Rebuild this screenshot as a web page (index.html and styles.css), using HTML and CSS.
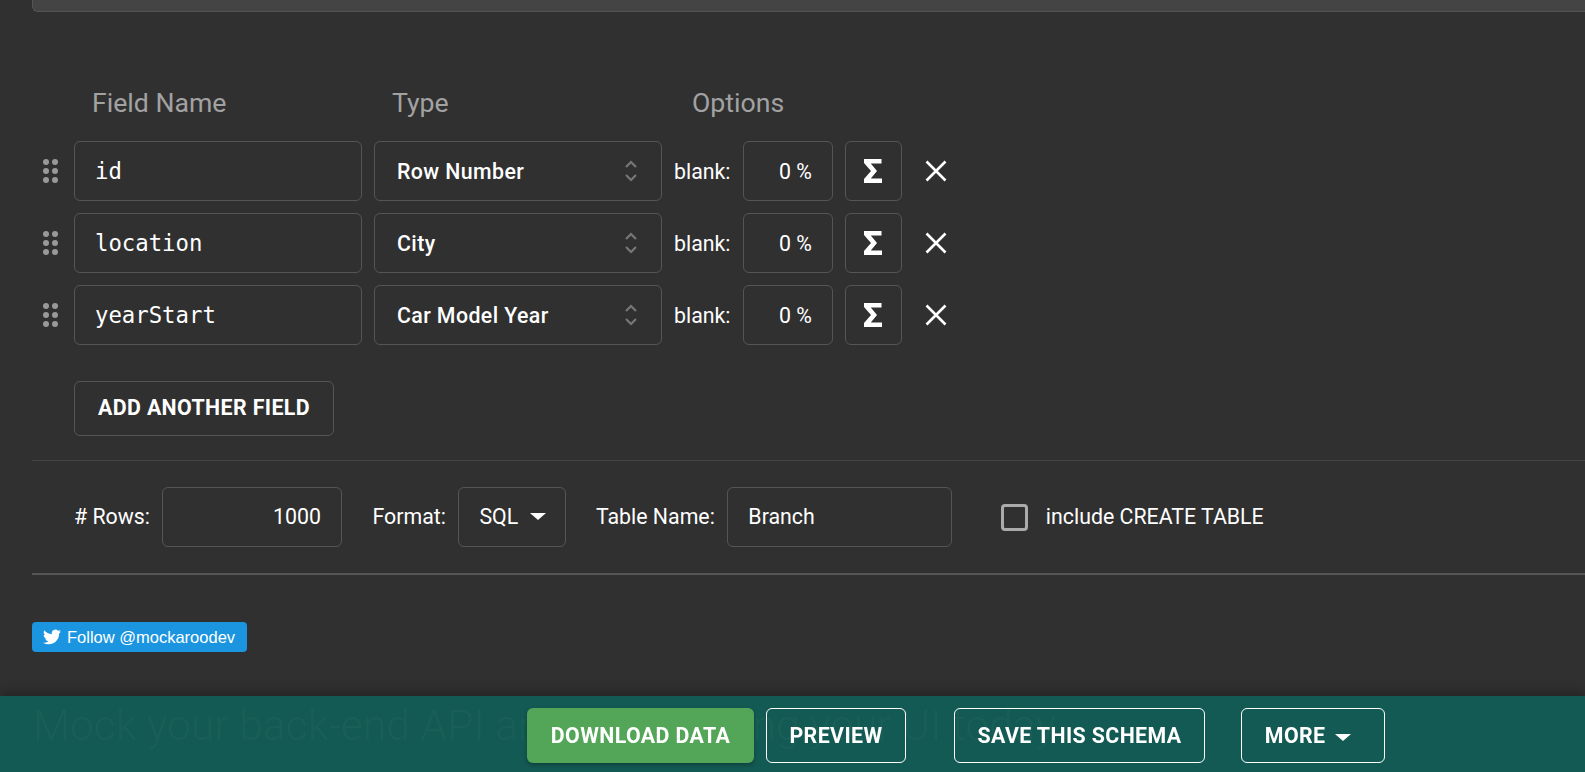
FILE: index.html
```html
<!DOCTYPE html>
<html>

<head>
    <title>Mockaroo</title>
    <link rel="stylesheet" href="styles.css">
</head>

<body>
    <div class="top-box"></div>

    <div class="field-head">
        <div class="head-name">Field Name</div>
        <div class="head-type">Type</div>
        <div class="head-options">Options</div>
    </div>

    <div class="field-row">
        <svg class="handle" width="15" height="24" viewBox="0 0 15 24"><g fill="#999"><circle cx="3" cy="3" r="3"/><circle cx="12" cy="3" r="3"/><circle cx="3" cy="12" r="3"/><circle cx="12" cy="12" r="3"/><circle cx="3" cy="21" r="3"/><circle cx="12" cy="21" r="3"/></g></svg>
        <div class="box name-box">id</div>
        <div class="box type-box"><span>Row Number</span><svg class="updown" width="14" height="26" viewBox="0 0 14 26"><path d="M2 9l5-5 5 5M2 17l5 5 5-5" fill="none" stroke="#777" stroke-width="2.2"/></svg></div>
        <span class="label blank-label">blank:</span>
        <div class="box blank-box">0 %</div>
        <div class="box sigma-box"><svg width="18" height="24" viewBox="0 0 18 24"><path d="M0 0h17.5v4.5H6.8L13 12l-6.2 7.500h11.200V24H0v-4L7 12 0 4z" fill="#fff"/></svg></div>
        <svg class="remove" width="22" height="22" viewBox="0 0 22 22"><path d="M1.500 1.500l19 19M20.500 1.500l-19 19" stroke="#fff" stroke-width="2.600" fill="none"/></svg>
    </div>

    <div class="field-row">
        <svg class="handle" width="15" height="24" viewBox="0 0 15 24"><g fill="#999"><circle cx="3" cy="3" r="3"/><circle cx="12" cy="3" r="3"/><circle cx="3" cy="12" r="3"/><circle cx="12" cy="12" r="3"/><circle cx="3" cy="21" r="3"/><circle cx="12" cy="21" r="3"/></g></svg>
        <div class="box name-box">location</div>
        <div class="box type-box"><span>City</span><svg class="updown" width="14" height="26" viewBox="0 0 14 26"><path d="M2 9l5-5 5 5M2 17l5 5 5-5" fill="none" stroke="#777" stroke-width="2.2"/></svg></div>
        <span class="label blank-label">blank:</span>
        <div class="box blank-box">0 %</div>
        <div class="box sigma-box"><svg width="18" height="24" viewBox="0 0 18 24"><path d="M0 0h17.5v4.5H6.8L13 12l-6.2 7.500h11.200V24H0v-4L7 12 0 4z" fill="#fff"/></svg></div>
        <svg class="remove" width="22" height="22" viewBox="0 0 22 22"><path d="M1.500 1.500l19 19M20.500 1.500l-19 19" stroke="#fff" stroke-width="2.600" fill="none"/></svg>
    </div>

    <div class="field-row">
        <svg class="handle" width="15" height="24" viewBox="0 0 15 24"><g fill="#999"><circle cx="3" cy="3" r="3"/><circle cx="12" cy="3" r="3"/><circle cx="3" cy="12" r="3"/><circle cx="12" cy="12" r="3"/><circle cx="3" cy="21" r="3"/><circle cx="12" cy="21" r="3"/></g></svg>
        <div class="box name-box">yearStart</div>
        <div class="box type-box"><span>Car Model Year</span><svg class="updown" width="14" height="26" viewBox="0 0 14 26"><path d="M2 9l5-5 5 5M2 17l5 5 5-5" fill="none" stroke="#777" stroke-width="2.2"/></svg></div>
        <span class="label blank-label">blank:</span>
        <div class="box blank-box">0 %</div>
        <div class="box sigma-box"><svg width="18" height="24" viewBox="0 0 18 24"><path d="M0 0h17.5v4.5H6.8L13 12l-6.2 7.500h11.200V24H0v-4L7 12 0 4z" fill="#fff"/></svg></div>
        <svg class="remove" width="22" height="22" viewBox="0 0 22 22"><path d="M1.500 1.500l19 19M20.500 1.500l-19 19" stroke="#fff" stroke-width="2.600" fill="none"/></svg>
    </div>

    <button class="btn add-btn">ADD ANOTHER FIELD</button>

    <div class="options-row">
        <span class="label rows-label">#&nbsp;Rows:</span>
        <div class="box rows-box">1000</div>
        <span class="label format-label">Format:</span>
        <div class="box format-box">SQL <span class="caret"></span></div>
        <span class="label table-label">Table Name:</span>
        <div class="box table-box">Branch</div>
        <span class="checkbox"></span>
        <span class="label">include CREATE TABLE</span>
    </div>

    <a class="follow" href="#">
        <svg width="18" height="18" viewBox="0 0 24 24"><path fill="#fff" d="M23.953 4.57a10 10 0 01-2.825.775 4.958 4.958 0 002.163-2.723c-.951.555-2.005.959-3.127 1.184a4.92 4.92 0 00-8.384 4.482C7.69 8.095 4.067 6.13 1.64 3.162a4.822 4.822 0 00-.666 2.475c0 1.71.87 3.213 2.188 4.096a4.904 4.904 0 01-2.228-.616v.06a4.923 4.923 0 003.946 4.827 4.996 4.996 0 01-2.212.085 4.936 4.936 0 004.604 3.417 9.867 9.867 0 01-6.102 2.105c-.39 0-.779-.023-1.17-.067a13.995 13.995 0 007.557 2.209c9.053 0 13.998-7.496 13.998-13.985 0-.21 0-.42-.015-.63A9.935 9.935 0 0024 4.59z"/></svg>
        Follow @mockaroodev
    </a>

    <div class="bottom-bar">
        <div class="ghost">Mock your back-end API and start coding your UI today</div>
        <button class="btn download">DOWNLOAD DATA</button>
        <button class="btn bar-btn preview">PREVIEW</button>
        <button class="btn bar-btn save">SAVE THIS SCHEMA</button>
        <button class="btn bar-btn more">MORE <span class="caret"></span></button>
    </div>
</body>

</html>
```

FILE: styles.css
```css
body {
    margin: 0;
    height: 772px;
    overflow: hidden;
    background-color: #303030;
    color: #fff;
    font-family: Roboto, sans-serif;
    font-size: 21.33px;
}

.top-box {
    height: 11px;
    margin-left: 32px;
    background-color: #444;
    border: 1px solid #555;
    border-top: none;
    border-right: none;
    border-bottom-left-radius: 6px;
}

.field-head {
    display: flex;
    height: 129px;
    padding-left: 92px;
    align-items: flex-end;
    box-sizing: border-box;
    padding-bottom: 22px;
    font-size: 26.67px;
    color: #a2a2a2;
}

.head-name,
.head-type {
    width: 300px;
}

.field-row {
    display: flex;
    align-items: center;
    height: 60px;
    margin-bottom: 12px;
    padding-left: 42px;
}

.handle {
    width: 15px;
    margin-left: 1px;
    margin-right: 16px;
}

.box {
    display: flex;
    align-items: center;
    box-sizing: border-box;
    height: 60px;
    border: 1px solid #555;
    border-radius: 6px;
}

.name-box {
    width: 288px;
    padding-left: 20px;
    font-family: "DejaVu Sans Mono", monospace;
    font-size: 22.300px;
}

.type-box {
    justify-content: space-between;
    width: 288px;
    margin-left: 12px;
    padding: 0 23px 0 22px;
    font-weight: 500;
    letter-spacing: 0.4px;
}

.label {
    white-space: nowrap;
}

.blank-label {
    width: 56px;
    margin-left: 12px;
    margin-right: 13px;
}

.blank-box {
    justify-content: flex-end;
    width: 90px;
    padding-right: 20px;
}

.sigma-box {
    justify-content: center;
    width: 57px;
    margin-left: 12px;
    padding-right: 2px;
}

.remove {
    margin-left: 23px;
}

.btn {
    box-sizing: border-box;
    height: 55px;
    border: 1px solid #555;
    border-radius: 6px;
    background: none;
    color: #fff;
    font-family: Roboto, sans-serif;
    font-size: 21.33px;
    font-weight: 700;
    letter-spacing: 0.4px;
    cursor: pointer;
}

.add-btn {
    display: block;
    width: 260px;
    margin: 36px 0 24px 74px;
    padding: 0 0 2px;
}

.options-row {
    display: flex;
    align-items: center;
    height: 115px;
    margin-left: 32px;
    padding-left: 42px;
    box-sizing: border-box;
    border-top: 1px solid #444;
    border-bottom: 2px solid #555;
}

.rows-label {
    width: 76px;
    margin-bottom: 2px;
}

.rows-box {
    justify-content: flex-end;
    width: 180px;
    margin-left: 12px;
    padding-right: 20px;
    padding-bottom: 2px;
}

.format-label {
    margin-left: 30.500px;
    margin-bottom: 2px;
}

.format-box {
    width: 108px;
    margin-left: 12.500px;
    padding-left: 20px;
    padding-bottom: 2px;
}

.format-box .caret {
    margin-left: 12px;
}

.table-label {
    margin-left: 29.500px;
    margin-bottom: 2px;
}

.table-box {
    width: 225px;
    margin-left: 12.500px;
    padding-left: 20px;
    padding-bottom: 2px;
}

.options-row .label:last-child {
    margin-bottom: 2px;
}

.checkbox {
    box-sizing: border-box;
    width: 27px;
    height: 27px;
    margin-left: 48.500px;
    margin-right: 18px;
    border: 3px solid #aaa;
    border-radius: 4px;
}

.caret {
    display: inline-block;
    border-top: 7px solid #fff;
    border-left: 8px solid transparent;
    border-right: 8px solid transparent;
}

.follow {
    display: flex;
    align-items: center;
    gap: 6px;
    box-sizing: border-box;
    width: 215px;
    height: 30px;
    margin: 47px 0 0 32px;
    padding-left: 11px;
    border-radius: 4px;
    background-color: #1b95e0;
    color: #fff;
    font-family: "Liberation Sans", sans-serif;
    font-size: 16.500px;
    text-decoration: none;
}

.bottom-bar {
    position: fixed;
    left: 0;
    right: 0;
    bottom: 0;
    display: flex;
    align-items: center;
    height: 76px;
    padding: 3px 0 0 527px;
    box-sizing: border-box;
    background-color: #145a54;
    box-shadow: 0 -4px 10px rgba(0, 0, 0, 0.25);
}

.ghost {
    position: absolute;
    left: 33px;
    top: 4px;
    font-size: 42.67px;
    font-weight: 300;
    color: #195f57;
    white-space: nowrap;
}

.download {
    position: relative;
    width: 227px;
    border: none;
    background-color: #53a557;
    box-shadow: 0 2px 4px rgba(0, 0, 0, 0.3);
}

.bar-btn {
    position: relative;
    border-color: #fff;
}

.preview {
    width: 140px;
    margin-left: 12px;
}

.save {
    width: 251px;
    margin-left: 48px;
}

.more {
    width: 144px;
    margin-left: 36px;
    padding: 0 10px 0 0;
}

.more .caret {
    margin-left: 4px;
    vertical-align: middle;
}
```
